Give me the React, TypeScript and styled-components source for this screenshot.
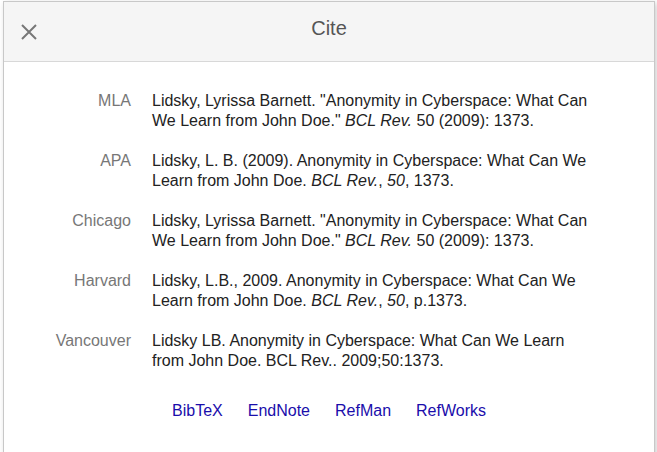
import React from "react";
import styled, { createGlobalStyle } from "styled-components";

const Global = createGlobalStyle`
  html, body { margin: 0; padding: 0; background: #fff; }
  body { font-family: "Liberation Sans", Arial, sans-serif; }
`;

const Page = styled.div`
  padding: 1px 0 0 3px;
  height: 451px;
  overflow: hidden;
`;

const Dialog = styled.div`
  width: 650px;
  height: 470px;
  background: #fff;
  border: 1px solid #c8c8c8;
  box-shadow: 2px 2px 6px rgba(0, 0, 0, 0.2);
  display: flex;
  flex-direction: column;
`;

const Header = styled.div`
  position: relative;
  height: 59px;
  background: #f5f5f5;
  border-bottom: 1px solid #d8d8d8;
  display: flex;
  align-items: center;
  justify-content: center;
`;

const Title = styled.h1`
  margin: 0 0 8px 0;
  font-size: 20px;
  font-weight: normal;
  color: #555;
  line-height: 24px;
`;

const CloseButton = styled.button`
  position: absolute;
  left: 15px;
  top: 20px;
  width: 20px;
  height: 20px;
  padding: 0;
  border: 0;
  background: transparent;
  display: flex;
  align-items: center;
  justify-content: center;
  cursor: pointer;
`;

const Body = styled.div`
  padding: 29px 0 0 27px;
  display: flex;
  flex-direction: column;
`;

const Entries = styled.div`
  display: flex;
  flex-direction: column;
  gap: 20px;
`;

const Entry = styled.div`
  display: flex;
  gap: 21px;
  font-size: 16px;
  line-height: 20px;
`;

const Label = styled.div`
  width: 100px;
  text-align: right;
  color: #777;
`;

const Citation = styled.div`
  width: 444px;
  color: #222;
`;

const Links = styled.div`
  margin: 30px 0 0 -27px;
  display: flex;
  justify-content: center;
  gap: 25px;
  font-size: 16px;
  line-height: 20px;
`;

const Link = styled.a`
  color: #1a0dab;
  text-decoration: none;
`;

const citations: { label: string; text: React.ReactNode }[] = [
  {
    label: "MLA",
    text: (
      <>
        Lidsky, Lyrissa Barnett. "Anonymity in Cyberspace: What Can We Learn from John Doe." <i>BCL Rev.</i> 50 (2009): 1373.
      </>
    ),
  },
  {
    label: "APA",
    text: (
      <>
        Lidsky, L. B. (2009). Anonymity in Cyberspace: What Can We Learn from John Doe. <i>BCL Rev.</i>, <i>50</i>, 1373.
      </>
    ),
  },
  {
    label: "Chicago",
    text: (
      <>
        Lidsky, Lyrissa Barnett. "Anonymity in Cyberspace: What Can We Learn from John Doe." <i>BCL Rev.</i> 50 (2009): 1373.
      </>
    ),
  },
  {
    label: "Harvard",
    text: (
      <>
        Lidsky, L.B., 2009. Anonymity in Cyberspace: What Can We Learn from John Doe. <i>BCL Rev.</i>, <i>50</i>, p.1373.
      </>
    ),
  },
  {
    label: "Vancouver",
    text: <>Lidsky LB. Anonymity in Cyberspace: What Can We Learn from John Doe. BCL Rev.. 2009;50:1373.</>,
  },
];

export default function App() {
  return (
    <>
      <Global />
      <Page>
        <Dialog>
          <Header>
            <CloseButton aria-label="Close">
              <svg width="18" height="18" viewBox="0 0 18 18">
                <path d="M2 2 L16 16 M16 2 L2 16" stroke="#777" strokeWidth="2" fill="none" />
              </svg>
            </CloseButton>
            <Title>Cite</Title>
          </Header>
          <Body>
            <Entries>
              {citations.map((c) => (
                <Entry key={c.label}>
                  <Label>{c.label}</Label>
                  <Citation>{c.text}</Citation>
                </Entry>
              ))}
            </Entries>
            <Links>
              <Link href="#">BibTeX</Link>
              <Link href="#">EndNote</Link>
              <Link href="#">RefMan</Link>
              <Link href="#">RefWorks</Link>
            </Links>
          </Body>
        </Dialog>
      </Page>
    </>
  );
}
